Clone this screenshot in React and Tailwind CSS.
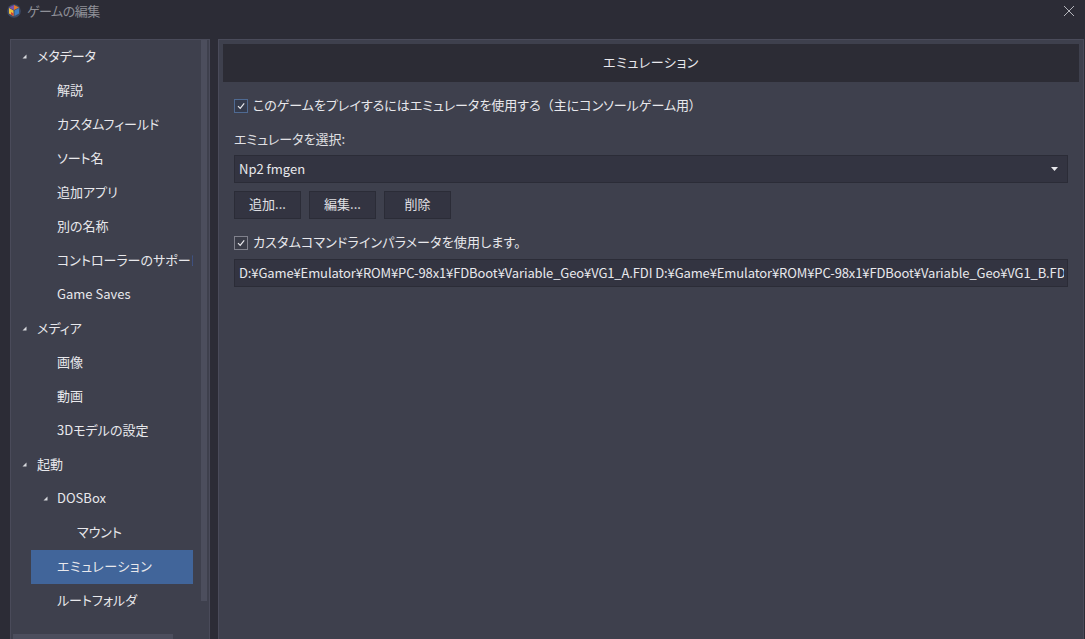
import React from "react";

function Tri() {
  return (
    <svg width="5" height="5" viewBox="0 0 5 5" className="w-[5px] shrink-0">
      <path d="M4.5 0.5V4.5H0.5Z" fill="#d8d9de" />
    </svg>
  );
}

function Row({ level = 0, selected = false, children }) {
  const pad = level === 1 ? "pl-[46px]" : "pl-[26px]";
  return (
    <div className={`h-[34px] flex items-center shrink-0 w-[162px] ml-[20px] pb-[2px] overflow-hidden ${selected ? "bg-[#41659a]" : ""}`}>
      <div className={`${pad} whitespace-nowrap text-[13px] text-[#e8e8ec] ${selected ? "tracking-[0.5px]" : ""}`}>{children}</div>
    </div>
  );
}

function Parent({ children, nested = false }) {
  return (
    <div className={`h-[34px] flex items-center shrink-0 pb-[2px] whitespace-nowrap text-[13px] text-[#e8e8ec] ${nested ? "pl-[32px]" : "pl-[11px]"}`}>
      <Tri />
      <span className={nested ? "ml-[9px]" : "ml-[10px]"}>{children}</span>
    </div>
  );
}

function Check({ blue }) {
  return (
    <span className={`w-[14px] h-[14px] shrink-0 border flex items-center justify-center ${blue ? "border-[#4f6a92] bg-[#353b4c]" : "border-[#80818c] bg-[#3a3c48]"}`}>
      <svg width="10" height="10" viewBox="0 0 10 10" fill="none">
        <path d="M2 5.2L4.2 7.4L8.2 2.4" stroke="#e8e8ec" strokeWidth="1.2" />
      </svg>
    </span>
  );
}

function Btn({ children }) {
  return (
    <div className="w-[67px] h-[28px] pb-[2px] flex items-center justify-center bg-[#333441] border border-[#2b2c37] text-[13px] text-[#e0e0e4]">
      {children}
    </div>
  );
}

export default function App() {
  return (
    <div
      className="w-[1085px] h-[639px] overflow-hidden bg-[#2c2c36] flex flex-col [font-feature-settings:'palt']"
      style={{ fontFamily: '"Noto Sans CJK JP", "Noto Sans", sans-serif' }}
    >
      <div className="h-[39px] shrink-0 pb-[17px] flex items-center pl-[7px] pr-[10px]">
        <svg width="14" height="14" viewBox="0 0 14 14" className="shrink-0">
          <circle cx="7" cy="7" r="6.8" fill="#3f4a66" />
          <path d="M7 1L12 3.5L7 6Z" fill="#e07a2c" />
          <path d="M2 3.5L7 1V6Z" fill="#7a52b0" />
          <path d="M2 4L6.5 6.5V12L2 9.5Z" fill="#eec03a" />
          <path d="M7.5 6.5L12 4V9.5L7.5 12Z" fill="#3d7fc4" />
          <path d="M4 8L6.5 9.5V12L4 10.5Z" fill="#d2423a" />
        </svg>
        <span className="ml-[6px] text-[13px] tracking-[-0.5px] text-[#8f9098]">ゲームの編集</span>
        <svg width="12" height="12" viewBox="0 0 12 12" className="ml-auto" fill="none">
          <path d="M1 1L11 11M11 1L1 11" stroke="#b4b5bb" strokeWidth="1" />
        </svg>
      </div>

      <div className="flex-1 min-h-0 flex pl-[10px] gap-[8px] pr-[1px]">
        <div className="relative w-[200px] shrink-0 bg-[#3e404d] border-t border-x border-[#4a4b5a] flex flex-col overflow-hidden">
          <Parent>メタデータ</Parent>
          <Row>解説</Row>
          <Row>カスタムフィールド</Row>
          <Row>ソート名</Row>
          <Row>追加アプリ</Row>
          <Row>別の名称</Row>
          <Row>コントローラーのサポート</Row>
          <Row>Game Saves</Row>
          <Parent>メディア</Parent>
          <Row>画像</Row>
          <Row>動画</Row>
          <Row>3Dモデルの設定</Row>
          <Parent>起動</Parent>
          <Parent nested>DOSBox</Parent>
          <Row level={1}>マウント</Row>
          <Row selected>エミュレーション</Row>
          <Row>ルートフォルダ</Row>
          <div className="absolute right-[2px] top-0 w-[6px] h-[561px] bg-[#4c4e5d]" />
          <div className="absolute left-[2px] bottom-0 w-[160px] h-[5px] bg-[#4c4e5d]" />
        </div>

        <div className="flex-1 min-w-0 bg-[#3e404d] border-t border-x border-[#4a4b5a] px-[4px] pt-[4px] flex flex-col">
          <div className="h-[38px] shrink-0 pb-[2px] bg-[#2c2c35] flex items-center justify-center text-[13px] tracking-[0.6px] text-[#e8e8ec]">
            エミュレーション
          </div>
          <div className="pl-[11px] pr-[11px] flex flex-col">
            <label className="mt-[16px] h-[16px] flex items-center gap-[5px] text-[13px] text-[#e8e8ec] whitespace-nowrap">
              <Check blue />
              <span className="-mt-[2px]">
                このゲームをプレイするにはエミュレータを使用する
                <span className="[font-feature-settings:normal]">（</span>
                主にコンソールゲーム用）
              </span>
            </label>
            <div className="mt-[18px] h-[16px] -translate-y-px flex items-center text-[13px] text-[#e0e0e4]">エミュレータを選択:</div>
            <div className="mt-[7px] h-[28px] bg-[#333441] border border-[#2b2c37] flex items-center pl-[4px] pr-[5px] pb-[1px] text-[13px] text-[#e8e8ec]">
              <span>Np2 fmgen</span>
              <svg width="7" height="4" viewBox="0 0 7 4" className="ml-auto mr-[4px]">
                <path d="M0 0H7L3.5 4Z" fill="#e8e8ec" />
              </svg>
            </div>
            <div className="mt-[8px] flex gap-[8px]">
              <Btn>追加...</Btn>
              <Btn>編集...</Btn>
              <Btn>削除</Btn>
            </div>
            <label className="mt-[16px] h-[16px] flex items-center gap-[5px] text-[13px] text-[#e8e8ec] whitespace-nowrap">
              <Check />
              <span className="-mt-[2px] tracking-[0.17px]">カスタムコマンドラインパラメータを使用します。</span>
            </label>
            <div className="mt-[8px] h-[28px] bg-[#333441] border border-[#2b2c37] pl-[4px] pr-[3px] pb-[1px] flex items-center text-[13px] text-[#e8e8ec]">
              <div className="w-full overflow-hidden whitespace-nowrap tracking-[-0.11px]">
                D:¥Game¥Emulator¥ROM¥PC-98x1¥FDBoot¥Variable_Geo¥VG1_A.FDI D:¥Game¥Emulator¥ROM¥PC-98x1¥FDBoot¥Variable_Geo¥VG1_B.FDI
              </div>
            </div>
          </div>
        </div>
      </div>
    </div>
  );
}
